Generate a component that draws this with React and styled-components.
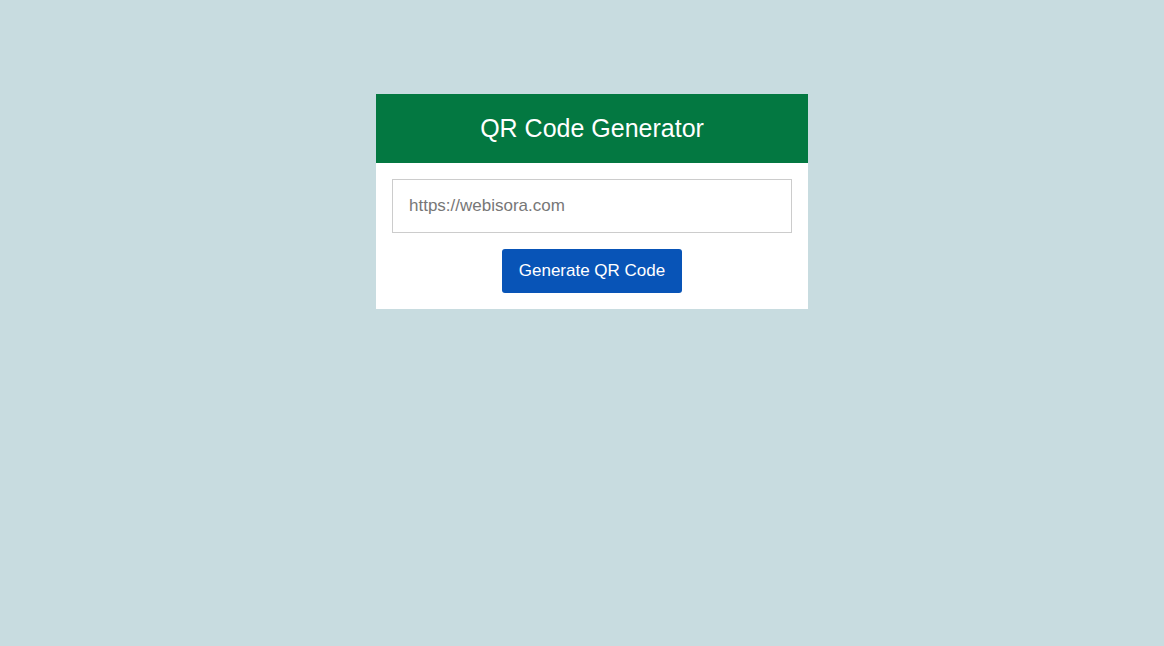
import React, { useState } from 'react'
import styled, { createGlobalStyle } from 'styled-components'

const GlobalStyle = createGlobalStyle`
  html, body {
    margin: 0;
    padding: 0;
    background: #c8dce0;
    font-family: "Liberation Sans", Arial, sans-serif;
  }
`

const Page = styled.div`
  min-height: 646px;
  display: flex;
  justify-content: center;
  align-items: flex-start;
  padding: 94px 0 0 20px;
  box-sizing: border-box;
`

const Card = styled.div`
  width: 432px;
  background: #ffffff;
`

const Header = styled.div`
  height: 69px;
  background: #037841;
  color: #ffffff;
  display: flex;
  align-items: center;
  justify-content: center;
`

const Title = styled.h1`
  margin: 0;
  font-size: 25px;
  font-weight: 400;
`

const Body = styled.div`
  padding: 16px;
  display: flex;
  flex-direction: column;
  align-items: center;
  gap: 16px;
`

const Input = styled.input`
  width: 100%;
  height: 54px;
  box-sizing: border-box;
  border: 1px solid #cccccc;
  padding: 0 16px;
  font-size: 17px;
  font-family: inherit;
  color: #333;
  outline: none;
  &::placeholder {
    color: #777777;
  }
`

const Button = styled.button`
  width: 180px;
  height: 44px;
  border: none;
  border-radius: 3px;
  background: #0854b7;
  color: #ffffff;
  font-size: 17px;
  font-family: inherit;
  cursor: pointer;
`

export default function App() {
  const [url, setUrl] = useState('')
  return (
    <>
      <GlobalStyle />
      <Page>
        <Card>
          <Header>
            <Title>QR Code Generator</Title>
          </Header>
          <Body>
            <Input
              placeholder="https://webisora.com"
              value={url}
              onChange={(e) => setUrl(e.target.value)}
            />
            <Button>Generate QR Code</Button>
          </Body>
        </Card>
      </Page>
    </>
  )
}
